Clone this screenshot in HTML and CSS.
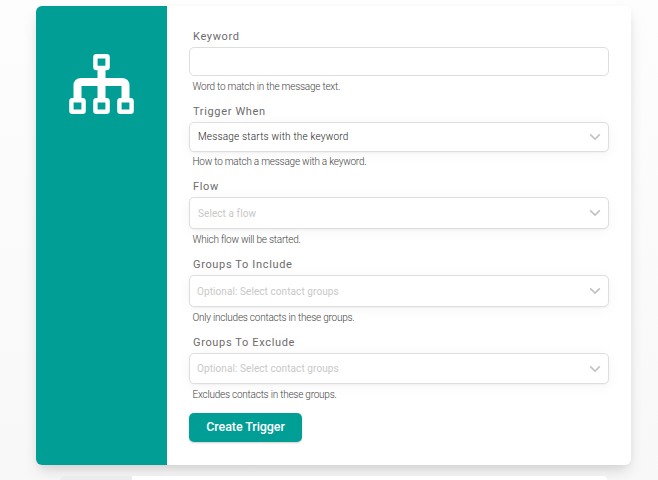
FILE: index.html
```html
<!DOCTYPE html>
<html lang="en">
<head>
<meta charset="utf-8">
<title>Create Trigger</title>
<link rel="stylesheet" href="styles.css">
</head>
<body>
<main class="card">
  <aside class="side">
    <svg class="flow-icon" width="65" height="60" viewBox="0 0 65 60" fill="none" stroke="#fff">
      <path d="M32.5 15v30M8.5 45V32Q8.5 28 12.5 28H52.5Q56.5 28 56.5 32V45" stroke-width="8"/>
      <g stroke-width="4.4" fill="#019e96">
        <rect x="26.4" y="2.2" width="12.2" height="11.8" rx="1"/>
        <rect x="2.4" y="46.2" width="12.2" height="11.6" rx="1"/>
        <rect x="26.4" y="46.2" width="12.2" height="11.6" rx="1"/>
        <rect x="50.4" y="46.2" width="12.2" height="11.6" rx="1"/>
      </g>
    </svg>
  </aside>
  <form class="form">
    <div class="field keyword">
      <label class="label"><span>Keyword</span></label>
      <div class="control"></div>
      <div class="help"><span>Word to match in the message text.</span></div>
    </div>
    <div class="field when">
      <label class="label"><span>Trigger When</span></label>
      <div class="control select"><span class="value">Message starts with the keyword</span><svg class="chevron" width="12" height="8" viewBox="0 0 12 8"><path d="M1.2 1.4 6 6.1l4.8-4.7"/></svg></div>
      <div class="help"><span>How to match a message with a keyword.</span></div>
    </div>
    <div class="field flow">
      <label class="label"><span>Flow</span></label>
      <div class="control select"><span class="placeholder">Select a flow</span><svg class="chevron" width="12" height="8" viewBox="0 0 12 8"><path d="M1.2 1.4 6 6.1l4.8-4.7"/></svg></div>
      <div class="help"><span>Which flow will be started.</span></div>
    </div>
    <div class="field groups">
      <label class="label"><span>Groups To Include</span></label>
      <div class="control select"><span class="placeholder">Optional: Select contact groups</span><svg class="chevron" width="12" height="8" viewBox="0 0 12 8"><path d="M1.2 1.4 6 6.1l4.8-4.7"/></svg></div>
      <div class="help"><span>Only includes contacts in these groups.</span></div>
    </div>
    <div class="field groups exclude">
      <label class="label"><span>Groups To Exclude</span></label>
      <div class="control select"><span class="placeholder">Optional: Select contact groups</span><svg class="chevron" width="12" height="8" viewBox="0 0 12 8"><path d="M1.2 1.4 6 6.1l4.8-4.7"/></svg></div>
      <div class="help"><span>Excludes contacts in these groups.</span></div>
    </div>
    <button class="submit" type="button">Create Trigger</button>
  </form>
</main>
<section class="next-card"><div class="next-side"></div></section>
</body>
</html>
```
FILE: styles.css
```css
* { box-sizing: border-box; }
body {
  margin: 0;
  height: 480px;
  padding: 6px 27px 0 36px;
  background: linear-gradient(#fdfdfd, #f8f8f8);
  font-family: Roboto, "Liberation Sans", sans-serif;
}
.card {
  display: flex;
  height: 459px;
  border-radius: 6px;
  background: #fff;
  box-shadow: 0 8px 16px -3px rgba(0,0,0,.14), 0 3px 8px -2px rgba(0,0,0,.06);
}
.side {
  width: 131px;
  padding: 48px 0 0 33px;
  border-radius: 6px 0 0 6px;
  background: #019e96;
}
.flow-icon { display: block; }
.form { width: 464px; padding: 19px 22px 0; }
.field { height: 78px; display: flex; flex-direction: column; }
.label {
  height: 22px;
  padding-left: 4px;
  font-size: 11px;
  line-height: 23px;
  letter-spacing: .65px;
  color: #6c6c6c;
}
.control {
  height: 32px;
  border: 1px solid #dedede;
  border-radius: 5px;
  background: #fff;
}
.select {
  display: flex;
  align-items: center;
  justify-content: space-between;
  padding: 0 7px 0 8px;
  font-size: 10px;
  box-shadow: 0 1px 2px rgba(0,0,0,.04), 0 2px 14px rgba(0,0,0,.045);
}
.help {
  padding-left: 3.5px;
  font-size: 10px;
  font-weight: 300;
  line-height: 21px;
  letter-spacing: -.23px;
  color: #444;
}
.value { color: #222; font-weight: 300; letter-spacing: .2px; }
.placeholder { color: #c8c8c8; letter-spacing: .08px; }
.chevron { fill: none; stroke: #c0c0c0; stroke-width: 1.5; }
.keyword, .when { height: 75px; }
.keyword .control { height: 29px; }
.when .control { height: 30px; }
.when .value { padding-bottom: 1px; }
.when .help { line-height: 20px; }
.groups .select { padding-left: 7px; }
.exclude { height: 82px; }
.exclude .control { height: 31px; }
.submit {
  display: block;
  width: 113px;
  height: 29px;
  padding: 0 0 1px;
  border: 0;
  border-radius: 5px;
  background: #019e96;
  box-shadow: 0 1px 2px rgba(0,0,0,.2);
  color: #fff;
  font: 500 12.5px/28px Roboto, sans-serif;
  letter-spacing: -.08px;
}
.next-card {
  display: flex;
  width: 547px;
  height: 4px;
  margin: 11px 0 0 24px;
  border-radius: 4px 4px 0 0;
  overflow: hidden;
  background: #fff;
}
.next-side { width: 72px; background: #ececec; }
```
